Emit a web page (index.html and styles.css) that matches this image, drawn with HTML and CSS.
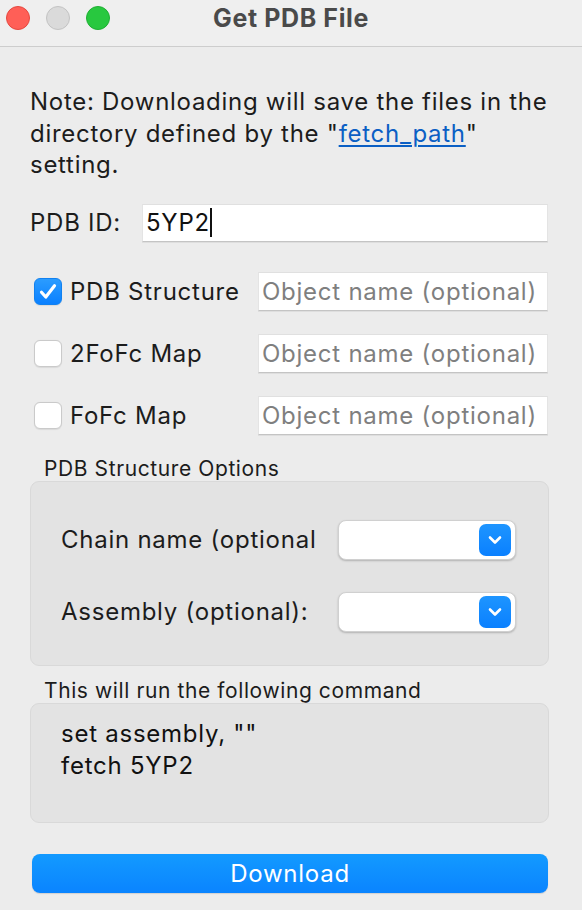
FILE: index.html
```html
<!DOCTYPE html>
<html lang="en">
<head>
<meta charset="utf-8">
<title>Get PDB File</title>
<link rel="stylesheet" href="styles.css">
</head>
<body>
<div class="window">
  <header class="titlebar">
    <div class="lights">
      <span class="light red"></span>
      <span class="light gray"></span>
      <span class="light green"></span>
    </div>
    <div class="title">Get PDB File</div>
    <div></div>
  </header>

  <main class="content">
    <p class="note">Note: Downloading will save the files in the directory defined by the "<a class="link" href="#">fetch_path</a>" setting.</p>

    <div class="id-row">
      <span class="id-label">PDB ID:</span>
      <div class="field id-field"><span>5YP2</span><span class="caret"></span></div>
    </div>

    <div class="check-rows">
      <div class="check-row">
        <span class="checkbox checked">
          <svg viewBox="0 0 28 27" width="28" height="27"><path d="M7.5 14.2 L11.8 19 L20.5 7.8" fill="none" stroke="#fff" stroke-width="3.2" stroke-linecap="round" stroke-linejoin="round"/></svg>
        </span>
        <span class="check-label">PDB Structure</span>
        <div class="field obj-field placeholder">Object name (optional)</div>
      </div>
      <div class="check-row">
        <span class="checkbox"></span>
        <span class="check-label">2FoFc Map</span>
        <div class="field obj-field placeholder">Object name (optional)</div>
      </div>
      <div class="check-row">
        <span class="checkbox"></span>
        <span class="check-label">FoFc Map</span>
        <div class="field obj-field placeholder">Object name (optional)</div>
      </div>
    </div>

    <div class="group-title first">PDB Structure Options</div>
    <section class="group options">
      <div class="opt-row">
        <span class="opt-label">Chain name (optional)</span>
        <div class="combo">
          <span class="combo-btn">
            <svg viewBox="0 0 32 32" width="32" height="32"><path d="M11 13.5 L16 18.5 L21 13.5" fill="none" stroke="#fff" stroke-width="2.6" stroke-linecap="round" stroke-linejoin="round"/></svg>
          </span>
        </div>
      </div>
      <div class="opt-row">
        <span class="opt-label">Assembly (optional):</span>
        <div class="combo">
          <span class="combo-btn">
            <svg viewBox="0 0 32 32" width="32" height="32"><path d="M11 13.5 L16 18.5 L21 13.5" fill="none" stroke="#fff" stroke-width="2.6" stroke-linecap="round" stroke-linejoin="round"/></svg>
          </span>
        </div>
      </div>
    </section>

    <div class="group-title second">This will run the following command</div>
    <section class="group command">
      <div>set assembly, ""</div>
      <div>fetch 5YP2</div>
    </section>

    <button class="download" type="button">Download</button>
  </main>
</div>
</body>
</html>
```

FILE: styles.css
```css
html, body {
  margin: 0;
  padding: 0;
}

body {
  background: #ececec;
  font-family: Inter, "Liberation Sans", Arial, sans-serif;
  color: #1c1c1c;
  width: 582px;
  height: 910px;
  overflow: hidden;
  letter-spacing: 0.75px;
}

.window {
  width: 582px;
  height: 910px;
}

.titlebar {
  height: 36px;
  padding-bottom: 10px;
  background: #efefef;
  border-bottom: 1px solid #cdcdcd;
  display: grid;
  grid-template-columns: 1fr auto 1fr;
  align-items: center;
}

.lights {
  display: flex;
  gap: 16px;
  padding-left: 6px;
}

.light {
  width: 24px;
  height: 24px;
  border-radius: 50%;
  box-sizing: border-box;
}

.light.red {
  background: #ff5f57;
  border: 1px solid #e5483f;
}

.light.gray {
  background: #dadada;
  border: 1px solid #c3c3c3;
}

.light.green {
  background: #28c83f;
  border: 1px solid #1eaf33;
}

.title {
  font-weight: 700;
  font-size: 25px;
  color: #4a4a4a;
  letter-spacing: 0.6px;
  line-height: 30px;
}

.content {
  padding: 0 34px 0 30px;
}

.note {
  margin: 39px -10px 0 0;
  font-size: 24px;
  line-height: 31.5px;
  letter-spacing: 0.72px;
}

.link {
  color: #0b5fc4;
  text-decoration: underline;
  text-underline-offset: 3px;
  text-decoration-thickness: 1.5px;
}

.id-row {
  display: flex;
  align-items: center;
  margin-top: 23px;
  font-size: 24px;
}

.id-label {
  width: 112px;
  flex: none;
}

.field {
  background: #fff;
  box-sizing: border-box;
  border-top: 1px solid #e0e0e0;
  border-left: 1px solid #e4e4e4;
  border-right: 1px solid #e4e4e4;
  border-bottom: 1px solid #c4c4c4;
  box-shadow: 0 1px 0 rgba(0,0,0,0.06);
  display: flex;
  align-items: center;
  padding-left: 3px;
  font-size: 24px;
}

.id-field {
  flex: 1;
  height: 38px;
  color: #111;
}

.caret {
  display: inline-block;
  width: 2px;
  height: 29px;
  background: #111;
  margin-left: 0;
}

.check-rows {
  margin-top: 30px;
  display: flex;
  flex-direction: column;
  gap: 23px;
}

.check-row {
  display: flex;
  align-items: center;
  height: 39px;
  font-size: 24px;
}

.checkbox {
  width: 28px;
  height: 27px;
  box-sizing: border-box;
  margin-left: 4px;
  margin-right: 8px;
  border-radius: 6px;
  background: #fff;
  border: 1px solid #cacaca;
  box-shadow: 0 0.5px 1px rgba(0,0,0,0.08);
  flex: none;
  display: flex;
}

.checkbox.checked {
  background: linear-gradient(#2b9cff, #0a80ff);
  border: 1px solid #1181f0;
}

.checkbox svg {
  display: block;
  margin: -1px;
}

.check-label {
  width: 188px;
  flex: none;
}

.obj-field {
  flex: 1;
  height: 39px;
}

.placeholder {
  color: #7f7f7f;
}

.group-title {
  font-size: 21px;
  line-height: 24px;
  letter-spacing: 0.6px;
  padding-left: 14px;
}

.group-title.first {
  margin-top: 22px;
}

.group-title.second {
  margin-top: 13px;
}

.group {
  box-sizing: border-box;
  background: #e3e3e3;
  border: 1px solid #d9d9d9;
  border-radius: 9px;
  margin-right: -1px;
}

.options {
  height: 185px;
  padding: 38px 32px 0 30px;
  display: flex;
  flex-direction: column;
  gap: 32px;
}

.opt-row {
  display: flex;
  align-items: center;
  height: 40px;
  font-size: 24px;
}

.opt-label {
  width: 255px;
  flex: none;
  white-space: nowrap;
  overflow: hidden;
  margin-right: 22px;
}

.combo {
  width: 178px;
  height: 40px;
  box-sizing: border-box;
  background: #fff;
  border-radius: 8px;
  border: 0.5px solid #d0d0d0;
  box-shadow: 0 1px 2px rgba(0,0,0,0.22);
  display: flex;
  align-items: center;
  justify-content: flex-end;
  padding-right: 4px;
}

.combo-btn {
  width: 32px;
  height: 32px;
  border-radius: 7px;
  background: linear-gradient(#1e95ff, #0a80ff);
  display: flex;
}

.combo-btn svg {
  display: block;
}

.command {
  height: 120px;
  padding: 14px 30px 0 30px;
  font-size: 24px;
  line-height: 32px;
  color: #111;
}

.download {
  display: block;
  margin: 31px 0 0 2px;
  width: 516px;
  height: 39px;
  border: none;
  border-radius: 8px;
  background: linear-gradient(#139aff, #0a84ff);
  box-shadow: 0 1px 1px rgba(0,0,0,0.12);
  color: #fff;
  font-family: Inter, "Liberation Sans", Arial, sans-serif;
  font-size: 24px;
  letter-spacing: 0.75px;
  padding: 0;
}
```
